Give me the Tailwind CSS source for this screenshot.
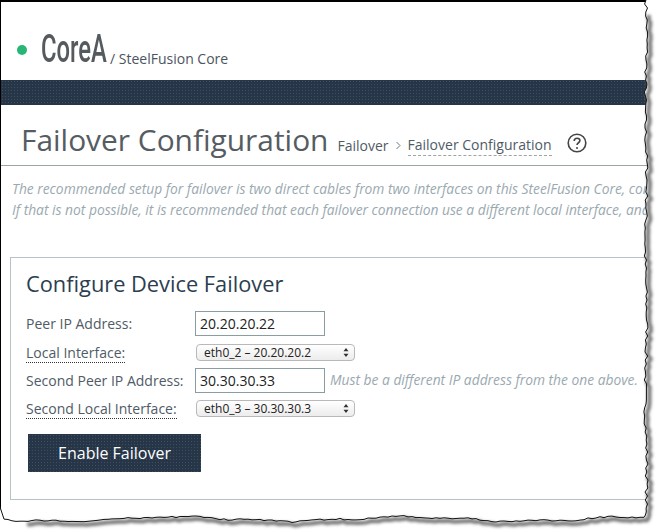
<!DOCTYPE html>
<html>
<head>
  <title>Failover Configuration</title>
  <script src="https://cdn.jsdelivr.net/npm/@tailwindcss/browser@4"></script>
</head>
<body class="bg-white">
  <div class="relative w-[657px] h-[532px] overflow-hidden bg-white font-['Open_Sans',sans-serif]">
    <div class="w-[657px] h-[532px] border-t-2 border-l-1 border-black overflow-hidden">

      <!-- Header -->
      <div class="flex items-center h-[78px] pl-[16px] pt-[18px]">
        <div class="w-[10px] h-[10px] rounded-full bg-[#27b673]"></div>
        <div class="w-[65px] ml-[14px] mt-[-2px] text-[39px] leading-[44px] font-medium text-[#555a5f] font-['Roboto',sans-serif] origin-left scale-x-[.61] whitespace-nowrap">CoreA</div>
        <div class="ml-[4px] mt-[16px] text-[14px] text-[#4b5560] whitespace-nowrap">/ SteelFusion Core</div>
      </div>

      <!-- Nav bar -->
      <div class="h-[25px] bg-[#263548] bg-[radial-gradient(#3f4f5c_0.6px,transparent_0.7px)] bg-[length:3px_3px]"></div>

      <!-- Title row -->
      <div class="flex items-end h-[61px] pl-[20px] pb-[5px] border-b border-[#9aa6a6] whitespace-nowrap">
        <h1 class="text-[29.9px] leading-[41px] text-[#555c62]">Failover Configuration</h1>
        <div class="flex items-center ml-[9px] mb-[4px] text-[14px] text-[#4f5b66]">
          <span>Failover</span>
          <svg class="mx-[6px]" width="7" height="9" viewBox="0 0 7 9" fill="none" stroke="#6b7680"><path d="M1.5 1l3.5 3.5L1.5 8"/></svg>
          <span class="border-b border-dashed border-[#9aa6a6]">Failover Configuration</span>
        </div>
        <svg class="ml-[15px] mb-[7px]" width="20" height="20" viewBox="0 0 20 20" fill="none" stroke="#444">
          <circle cx="10" cy="10" r="8.8" stroke-width="1.6"/>
          <path d="M7.2 8c0-1.8 1.2-2.8 2.9-2.8s2.8 1 2.8 2.4c0 2.2-2.9 2.1-2.9 4.4" stroke-width="1.6"/>
          <circle cx="10" cy="15" r="1" fill="#444" stroke="none"/>
        </svg>
      </div>

      <!-- Note -->
      <div class="pl-[11px] pt-[12px] text-[13.8px] leading-[21px] italic text-[#9aa9b0] whitespace-nowrap">
        <p>The recommended setup for failover is two direct cables from two interfaces on this SteelFusion Core, connected to the peer.</p>
        <p>If that is not possible, it is recommended that each failover connection use a different local interface, and reach the peer.</p>
      </div>

      <!-- Card -->
      <div class="ml-[9px] mt-[37px] w-[700px] h-[243px] border border-[#b6c2c6] pl-[15px]">
        <h2 class="pt-[11px] text-[21.8px] leading-[30px] text-[#2b3e50]">Configure Device Failover</h2>

        <div class="mt-[8px] flex items-center h-[33px]">
          <label class="w-[169px] text-[14px] text-[#4f5b66]">Peer IP Address:</label>
          <input class="w-[130px] h-[25px] border border-[#8a9ea2] px-[4px] text-[14px] text-[#222] font-['Open_Sans',sans-serif]" value="20.20.20.22">
        </div>

        <div class="flex items-center h-[24px]">
          <div class="w-[170px]"><label class="text-[14px] text-[#4f5b66] border-b border-dotted border-[#333]">Local Interface:</label></div>
          <div class="relative w-[159px] h-[17px]">
            <select class="block appearance-none w-full h-full rounded-[4px] border border-[#b9b9b9] bg-gradient-to-b from-white to-[#ececec] pl-[7px] text-[12px] leading-[15px] text-[#222] font-['Open_Sans',sans-serif]">
              <option>eth0_2 – 20.20.20.2</option>
            </select>
            <svg class="absolute right-[6px] top-[4px]" width="6" height="9" viewBox="0 0 6 9" fill="#333"><path d="M3 0l2.5 3.3h-5zM3 9L.5 5.7h5z"/></svg>
          </div>
        </div>

        <div class="flex items-center h-[32px]">
          <label class="w-[169px] text-[14px] text-[#4f5b66]">Second Peer IP Address:</label>
          <input class="w-[130px] h-[25px] border border-[#8a9ea2] px-[4px] text-[14px] text-[#222] font-['Open_Sans',sans-serif]" value="30.30.30.33">
          <span class="ml-[5px] text-[13.8px] italic text-[#9aa9b0] whitespace-nowrap">Must be a different IP address from the one above.</span>
        </div>

        <div class="flex items-center h-[24px]">
          <div class="w-[170px]"><label class="text-[14px] text-[#4f5b66] border-b border-dotted border-[#333]">Second Local Interface:</label></div>
          <div class="relative w-[159px] h-[17px]">
            <select class="block appearance-none w-full h-full rounded-[4px] border border-[#b9b9b9] bg-gradient-to-b from-white to-[#ececec] pl-[7px] text-[12px] leading-[15px] text-[#222] font-['Open_Sans',sans-serif]">
              <option>eth0_3 – 30.30.30.3</option>
            </select>
            <svg class="absolute right-[6px] top-[4px]" width="6" height="9" viewBox="0 0 6 9" fill="#333"><path d="M3 0l2.5 3.3h-5zM3 9L.5 5.7h5z"/></svg>
          </div>
        </div>

        <button class="block ml-[2px] mt-[14px] w-[173px] h-[38px] bg-[#263548] bg-[radial-gradient(#3f4f5c_0.6px,transparent_0.7px)] bg-[length:3px_3px] text-[16px] font-medium text-white">Enable Failover</button>
      </div>
    </div>

    <!-- Torn paper edge, on top of the screenshot -->
    <svg class="absolute left-0 top-0" width="657" height="532" viewBox="0 0 657 532">
      <defs>
        <filter id="blur" x="-5%" y="-5%" width="110%" height="110%"><feGaussianBlur stdDeviation="1.5"/></filter>
      </defs>
      <path id="tornFill" fill="#fff" fill-rule="evenodd"/>
      <path id="tornShadow" fill="none" stroke="#777" stroke-width="4" filter="url(#blur)"/>
      <path id="tornLine" fill="none" stroke="#111" stroke-width="1"/>
    </svg>
  </div>

  <script>
    // jagged edge: down the right side, then back along the bottom
    let seed = 7;
    function rnd() {
      seed = (seed * 16807) % 2147483647;
      return seed / 2147483647;
    }

    const pts = [[646, 0]];
    for (let y = 4; y < 519; y += 4) {
      pts.push([646 + Math.sin(y / 23) * 0.8 + rnd() * 3 - 1.5, y]);
    }
    for (let x = 644; x > 0; x -= 4) {
      pts.push([x, 519 + Math.sin(x / 37) * 2 + Math.sin(x / 11) * 0.8 + rnd() * 1.6 - 0.8]);
    }
    pts.push([0, 507]);

    const edge = 'M' + pts.map(p => p[0].toFixed(1) + ' ' + p[1].toFixed(1)).join('L');
    document.getElementById('tornLine').setAttribute('d', edge);
    document.getElementById('tornFill').setAttribute('d', edge + 'L0 532L657 532L657 0Z');

    const shadow = pts.slice(3, -6).map(p => (p[0] + 3).toFixed(1) + ' ' + (p[1] + 3).toFixed(1));
    document.getElementById('tornShadow').setAttribute('d', 'M' + shadow.join('L'));
  </script>
</body>
</html>
